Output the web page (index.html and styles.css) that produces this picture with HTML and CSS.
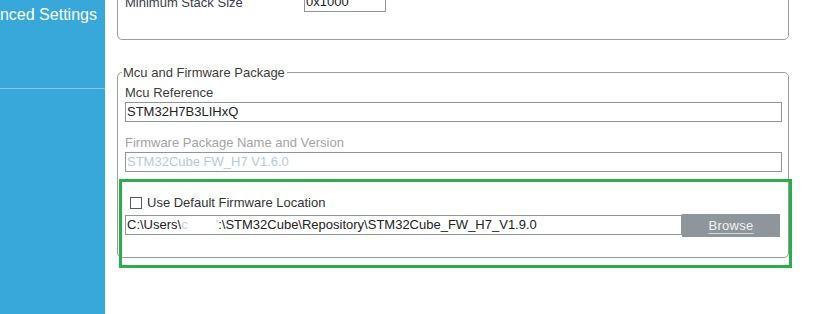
FILE: index.html
```html
<!DOCTYPE html>
<html>
<head>
<meta charset="utf-8">
<link rel="stylesheet" href="styles.css">
</head>
<body>
<div class="app">
  <aside class="sidebar">
    <div class="nav-item">Advanced Settings</div>
    <div class="nav-sep"></div>
  </aside>
  <main class="main">
    <section class="group group-top">
      <div class="row">
        <span class="row-label">Minimum Stack Size</span>
        <span class="field field-small">0x1000</span>
      </div>
    </section>
    <div class="mcu-wrap">
      <fieldset class="group group-mcu">
        <legend class="legend">Mcu and Firmware Package</legend>
        <div class="label label-first">Mcu Reference</div>
        <div class="field">STM32H7B3LIHxQ</div>
        <div class="label label-disabled">Firmware Package Name and Version</div>
        <div class="field field-disabled">STM32Cube FW_H7 V1.6.0</div>
        <div class="check-row">
          <span class="checkbox"></span>
          <span class="check-label">Use Default Firmware Location</span>
        </div>
        <div class="path-row">
          <div class="field field-path">C:\Users\<span class="redact-c">c</span><span class="redact"></span><span class="redact-c">'</span>:\STM32Cube\Repository\STM32Cube_FW_H7_V1.9.0</div>
          <button class="browse"><span class="browse-text">Browse</span></button>
        </div>
      </fieldset>
      <div class="highlight"></div>
    </div>
  </main>
</div>
</body>
</html>
```
FILE: styles.css
```css
html, body {
  margin: 0;
  padding: 0;
  background: #ffffff;
  overflow: hidden;
}
body {
  font-family: "Liberation Sans", Arial, sans-serif;
  font-size: 13px;
  line-height: 15px;
  color: #3c3c3c;
}
.app {
  display: flex;
  width: 839px;
  height: 314px;
  overflow: hidden;
}
.sidebar {
  width: 105px;
  flex: 0 0 105px;
  background: #38a8db;
  overflow: hidden;
}
.nav-item {
  font-size: 16px;
  line-height: 19px;
  color: #ffffff;
  white-space: nowrap;
  margin-left: -36.5px;
  padding-top: 5px;
  height: 83px;
  box-sizing: border-box;
}
.nav-sep {
  height: 1px;
  margin-top: 5px;
  background: #86c9ea;
}
.main {
  flex: 1;
  padding-left: 12px;
}
.group {
  width: 672px;
  box-sizing: border-box;
  border: 1px solid #979ea3;
  border-radius: 5px;
}
.group-top {
  margin-top: -19px;
  padding: 10px 6px 27px 7px;
}
.row {
  display: flex;
  align-items: center;
}
.row-label {
  width: 179px;
  color: #3c3c4a;
}
.field {
  height: 20px;
  box-sizing: border-box;
  border: 1px solid #8f969b;
  padding: 1px 0 0 1px;
  color: #222222;
  white-space: nowrap;
  overflow: hidden;
  line-height: 16px;
}
.field-small {
  width: 82px;
}
.mcu-wrap {
  position: relative;
  margin-top: 25px;
}
.group-mcu {
  margin: 0;
  padding: 5px 6px 20px 7px;
}
.legend {
  padding: 0 2px 0 1px;
  margin-left: -3px;
  line-height: 15px;
  color: #3c3c3c;
}
.label {
  margin-top: 13px;
  margin-bottom: 2px;
}
.label-first {
  margin-top: 0;
}
.label-disabled {
  color: #a3a3a3;
}
.field-disabled {
  color: #b7c8da;
}
.check-row {
  display: flex;
  align-items: center;
  margin-top: 23px;
  height: 15px;
}
.checkbox {
  width: 12px;
  height: 12px;
  box-sizing: border-box;
  border: 1px solid #5a5a5a;
  margin-left: 5px;
  margin-right: 5px;
  background: #ffffff;
}
.check-label {
  color: #333333;
}
.path-row {
  display: flex;
  align-items: flex-start;
  margin-top: 4px;
}
.field-path {
  width: 557px;
  margin-top: 1px;
}
.redact-c {
  color: #cfcfcf;
}
.redact {
  display: inline-block;
  width: 28px;
}
.browse {
  width: 98px;
  height: 23px;
  border: none;
  padding: 0;
  margin: 0;
  background: #8f969b;
  font-family: "Liberation Sans", Arial, sans-serif;
  font-size: 13px;
  color: #f2f2f2;
  letter-spacing: 0.3px;
}
.browse-text {
  text-decoration: underline;
  text-decoration-color: #d8d8d8;
  text-underline-offset: 3px;
}
.highlight {
  position: absolute;
  left: 2px;
  top: 114px;
  width: 673px;
  height: 89px;
  box-sizing: border-box;
  border: 3px solid #2aae4c;
  pointer-events: none;
}
```
